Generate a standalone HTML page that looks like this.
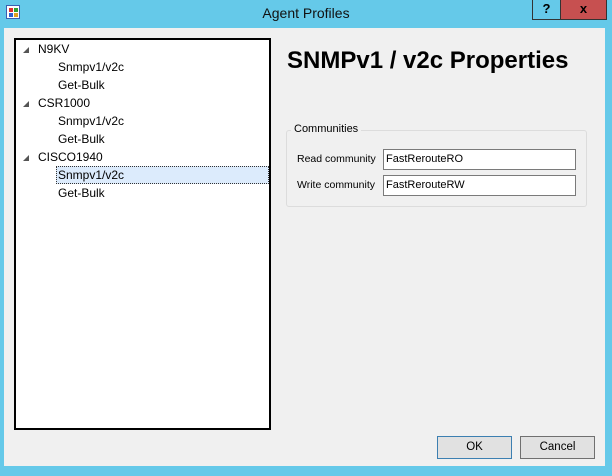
<!DOCTYPE html>
<html><head><style>
*{margin:0;padding:0;box-sizing:border-box}
body{width:612px;height:476px;background:#65c9e9;position:relative;font-family:"Liberation Sans",sans-serif;font-size:11px;color:#000;overflow:hidden}
.abs{position:absolute}
.client{left:4px;top:28px;width:601px;height:438px;background:#f0f0f0}
.tree{left:14px;top:38px;width:257px;height:392px;background:#fff;border:2px solid #000}
.t{position:absolute;font-size:12px;white-space:nowrap}
.tri{position:absolute;width:0;height:0;border-left:6px solid transparent;border-bottom:6px solid #555}
.btn{position:absolute;height:23px;background:#e1e1e1;border:1px solid #adadad;text-align:center;line-height:21px;font-size:11.5px}
.tb{position:absolute;left:383px;width:193px;height:21px;background:#fff;border:1px solid #7a7a7a;padding-left:2px;line-height:19px;font-size:11px}
.lb{position:absolute;left:297px;font-size:10.5px}
</style></head><body>
<div class="abs" style="left:6px;top:5px;width:14px;height:14px;background:#fff;border:1px solid #3a5fb0">
 <div class="abs" style="left:2px;top:2px;width:4px;height:4px;background:#e03030"></div>
 <div class="abs" style="left:7px;top:2px;width:4px;height:4px;background:#30a030"></div>
 <div class="abs" style="left:2px;top:7px;width:4px;height:4px;background:#3060d0"></div>
 <div class="abs" style="left:7px;top:7px;width:4px;height:4px;background:#e0a020"></div>
</div>
<div class="abs" style="left:0;width:612px;top:5px;text-align:center;font-size:14px;color:#111">Agent Profiles</div>
<div class="abs" style="left:532px;top:0;width:29px;height:20px;border:1px solid #333;border-top:none;text-align:center;font-weight:bold;font-size:13px;line-height:18px">?</div>
<div class="abs" style="left:560px;top:0;width:47px;height:20px;background:#c75050;border:1px solid #333;border-top:none;text-align:center;font-weight:bold;font-size:13px;line-height:18px">x</div>
<div class="abs client"></div>
<div class="abs tree">
 <div class="tri" style="left:7px;top:7px"></div><div class="t" style="left:22px;top:2px">N9KV</div>
 <div class="t" style="left:42px;top:20px">Snmpv1/v2c</div>
 <div class="t" style="left:42px;top:38px">Get-Bulk</div>
 <div class="tri" style="left:7px;top:61px"></div><div class="t" style="left:22px;top:56px">CSR1000</div>
 <div class="t" style="left:42px;top:74px">Snmpv1/v2c</div>
 <div class="t" style="left:42px;top:92px">Get-Bulk</div>
 <div class="tri" style="left:7px;top:115px"></div><div class="t" style="left:22px;top:110px">CISCO1940</div>
 <div class="abs" style="left:40px;top:126px;width:213px;height:18px;background:#dcebfc;border:1px dotted #333"></div>
 <div class="t" style="left:42px;top:128px">Snmpv1/v2c</div>
 <div class="t" style="left:42px;top:146px">Get-Bulk</div>
</div>
<div class="abs" style="left:287px;top:47px;font-size:24px;font-weight:bold">SNMPv1 / v2c Properties</div>
<div class="abs" style="left:286px;top:130px;width:301px;height:77px;border:1px solid #dcdcdc;border-radius:3px"></div>
<div class="abs" style="left:291px;top:123px;background:#f0f0f0;padding:0 3px;font-size:11px">Communities</div>
<div class="lb" style="top:153px">Read community</div>
<div class="tb" style="top:149px">FastRerouteRO</div>
<div class="lb" style="top:179px">Write community</div>
<div class="tb" style="top:175px">FastRerouteRW</div>
<div class="btn" style="left:437px;top:436px;width:75px;border-color:#3c7fb1">OK</div>
<div class="btn" style="left:520px;top:436px;width:75px;border-color:#707070">Cancel</div>
</body></html>
